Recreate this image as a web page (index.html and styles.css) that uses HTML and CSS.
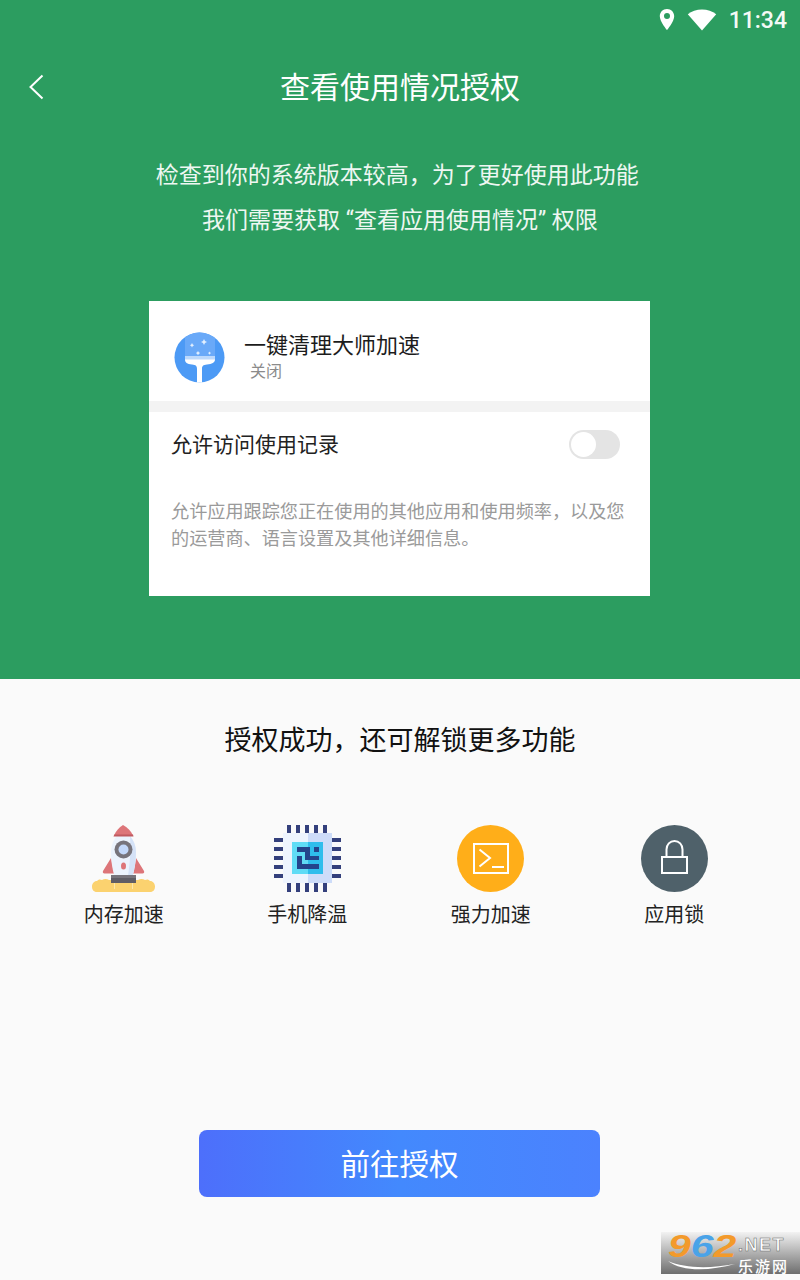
FILE: index.html
```html
<!DOCTYPE html>
<html lang="zh-CN">

<head>
    <meta charset="UTF-8">
    <meta name="viewport" content="width=device-width, initial-scale=1.0">
    <title>查看使用情况授权</title>
    <link rel="stylesheet" href="styles.css">
</head>

<body>
    <div id="main">
        <section class="top">
            <div class="status">
                <svg class="pin" width="16" height="24" viewBox="0 0 16 24">
                    <path fill="#fff" fill-rule="evenodd" d="M8 1C3.800 1 .8 4.200 .8 8.200 .8 13.500 8 22 8 22s7.200-8.500 7.200-13.800C15.200 4.200 12.200 1 8 1zm0 10.100a3 3 0 1 1 0-6 3 3 0 0 1 0 6z" />
                </svg>
                <svg class="wifi" width="30" height="22" viewBox="0 0 30 22">
                    <path fill="#fff" d="M15 21.500 .8 5.300C4.500 2.300 9.500 .6 15 .6s10.500 1.700 14.200 4.700z" />
                </svg>
                <span class="clock">11:34</span>
            </div>
            <header class="title-bar">
                <svg class="back" width="16" height="26" viewBox="0 0 16 26">
                    <path fill="none" stroke="#fff" stroke-width="2" d="M14.500 1.500 2.500 13l12 11.500" />
                </svg>
                <h1>查看使用情况授权</h1>
            </header>
            <p class="intro">检查到你的系统版本较高，为了更好使用此功能&nbsp;<br>我们需要获取 “查看应用使用情况” 权限</p>

            <div class="card">
                <div class="app-row">
                    <svg class="app-icon" width="51" height="51" viewBox="0 0 51 51">
                        <clipPath id="clip"><circle cx="25.500" cy="25.500" r="25" /></clipPath>
                        <circle cx="25.500" cy="25.500" r="25" fill="#4c9af5" />
                        <path fill="#69a9f8" d="M11 0h30v25H11z" clip-path="url(#clip)" />
                        <path fill="#bcd9fc" d="M11 24h30v4H11z" />
                        <path fill="#fff" d="M11 27.500h30c0 3-3 4.500-8 5-4 .5-5 1.500-5 4.500v13.500h-5V37c0-3-1-4-5-4.500-5-.5-7-2-7-5z" />
                        <path fill="#e2effe" d="m18 11 .8 1.400 1.400.8-1.400.8-.8 1.500-.8-1.500-1.400-.8 1.400-.8zM30 7l1 2 2 1-2 1-1 2-1-2-2-1 2-1zM24 19l.8 1.300 1.300.8-1.300.8-.8 1.300-.8-1.300-1.300-.8 1.300-.8zM35.500 19.500l.6 1 1 .6-1 .6-.6 1-.6-1-1-.6 1-.6z" />
                    </svg>
                    <div class="app-text">
                        <div class="app-name">一键清理大师加速</div>
                        <div class="app-state">关闭</div>
                    </div>
                </div>
                <div class="switch-row">
                    <span class="switch-label">允许访问使用记录</span>
                    <span class="switch"><span class="knob"></span></span>
                </div>
                <p class="desc">允许应用跟踪您正在使用的其他应用和使用频率，以及您的运营商、语言设置及其他详细信息。</p>
            </div>
        </section>

        <section class="bottom">
            <h2>授权成功，还可解锁更多功能</h2>
            <div class="features">
                <div class="feature">
                    <svg width="67" height="67" viewBox="0 0 67 67">
                        <path fill="#fbd26f" d="M7 67c-3.500 0-5-2.500-5-5.500S4 56 7 56c1-1.500 3-2 5-1 2-1.500 5-1.500 7 0h29c2-1.500 5-1.500 7 0 2-1 4-.5 5 1 3 0 5 2.500 5 5.500S63.500 67 60 67z" />
                        <path fill="#fde7a8" d="M24 58h1v6h-1zM42 58h1v6h-1z" />
                        <path fill="#dd7579" d="M21 33 13 46c-.5 1.500 0 2.500 1.500 2.500H24zM46 33l8 13c.5 1.500 0 2.500-1.500 2.500H43z" />
                        <path fill="#ecf3fd" d="M33.500 4C26 10 21 18 21 27c0 8 1 16 3.500 24h18C45 43 46 35 46 27c0-9-5-17-12.500-23z" />
                        <path fill="#d5e2f7" d="M40 11c4 5 6 10 6 16 0 8-1 16-3.500 24H38c2-13 3-27 2-40z" />
                        <path fill="#dd7579" d="M33 0C29 2.500 26 6 24 10.500h19C41 6 37.500 2.500 33 0z" />
                        <path fill="#c05a60" d="M23.500 11.500h20L43 9.500H24.300z" />
                        <circle cx="33.500" cy="24.500" r="9" fill="#77747c" />
                        <circle cx="33.500" cy="24.500" r="5" fill="#c3d8fa" />
                        <ellipse cx="33.500" cy="41" rx="2.500" ry="3.500" fill="#dd7579" />
                        <path fill="#5f5d65" d="M21 50h25v8H21z" />
                        <path fill="#77747c" d="M21 50h25v3H21z" />
                    </svg>
                    <span>内存加速</span>
                </div>
                <div class="feature">
                    <svg width="67" height="67" viewBox="0 0 67 67">
                        <path fill="#34407c" d="M13 0h4v9h-4zM22 0h4v9h-4zM31 0h4v9h-4zM40 0h4v9h-4zM49 0h4v9h-4zM13 58h4v9h-4zM22 58h4v9h-4zM31 58h4v9h-4zM40 58h4v9h-4zM49 58h4v9h-4zM0 13h9v4H0zM0 22h9v4H0zM0 31h9v4H0zM0 40h9v4H0zM0 49h9v4H0zM58 13h9v4h-9zM58 22h9v4h-9zM58 31h9v4h-9zM58 40h9v4h-9zM58 49h9v4h-9z" />
                        <path fill="#eef4fe" d="M9 8h25v50H9z" />
                        <path fill="#cddcf9" d="M34 8h24v50H34z" />
                        <path fill="#60dcf6" d="M18 17h16v32H18z" />
                        <path fill="#2fbdec" d="M34 17h15v32H34z" />
                        <path fill="#24448c" d="M23 22h13v5H23zM40 22h5v5h-5zM31 27h5v4h9v4H31zM23 31h5v8h17v5H23z" />
                    </svg>
                    <span>手机降温</span>
                </div>
                <div class="feature">
                    <svg width="67" height="67" viewBox="0 0 67 67">
                        <circle cx="33.500" cy="33.500" r="33.500" fill="#ffae19" />
                        <path fill="none" stroke="#fff" stroke-width="2" d="M17 19h34v29H17zM22.500 24.500 33 33l-10.500 8.500M35 42h12" />
                    </svg>
                    <span>强力加速</span>
                </div>
                <div class="feature">
                    <svg width="67" height="67" viewBox="0 0 67 67">
                        <circle cx="33.500" cy="33.500" r="33.500" fill="#4f616a" />
                        <path fill="none" stroke="#fff" stroke-width="2" d="M21 32h25v16H21zM25.500 32v-7.500c0-5 3.500-8.500 8-8.500s8 3.500 8 8.500V32" />
                    </svg>
                    <span>应用锁</span>
                </div>
            </div>
            <button class="go">前往授权</button>
        </section>

        <div class="watermark">
            <div class="wm-left">
                <span class="wm-num">9<span class="wm-blue">6</span>2</span>
                <svg class="wm-swoosh" width="68" height="12" viewBox="0 0 68 12">
                    <path fill="#fff" d="M0 1c16 7 40 8 67 3C42 11 14 12 0 1z" />
                </svg>
            </div>
            <div class="wm-right">
                <span class="wm-net">.NET</span>
                <span class="wm-sub">乐游网</span>
            </div>
        </div>
    </div>
</body>

</html>
```

FILE: styles.css
```css
* {
    margin: 0;
    padding: 0;
    box-sizing: border-box;
    font-family: "Noto Sans CJK SC", "Noto Sans", sans-serif;
}

#main {
    position: relative;
    width: 800px;
    height: 1280px;
    overflow: hidden;
    background-color: #fafafa;
}

.top {
    height: 679px;
    background-color: #2c9d60;
    color: #fff;
    display: flex;
    flex-direction: column;
    align-items: center;
}

.status {
    width: 100%;
    height: 40px;
    padding-right: 13px;
    display: flex;
    align-items: center;
    justify-content: flex-end;
}

.pin {
    margin-right: 12px;
}

.wifi {
    margin-right: 12px;
}

.clock {
    font-family: Roboto, sans-serif;
    font-size: 23px;
    font-weight: 500;
    color: #f4faf6;
}

.title-bar {
    position: relative;
    width: 100%;
    height: 94px;
    display: flex;
    align-items: center;
    justify-content: center;
}

.back {
    position: absolute;
    left: 28px;
    top: 34px;
}

h1 {
    font-size: 30px;
    font-weight: 400;
    line-height: 90px;
    margin-bottom: 4px;
}

.intro {
    margin-top: 19px;
    font-family: Roboto, "Noto Sans CJK SC", sans-serif;
    font-size: 23px;
    line-height: 45px;
    text-align: center;
    color: #eef7f2;
}

.card {
    width: 501px;
    height: 295px;
    margin-top: 58px;
    margin-right: 1px;
    background-color: #fff;
    color: #222;
}

.app-row {
    height: 111px;
    padding: 31px 0 0 25px;
    display: flex;
    border-bottom: 11px solid #f3f3f3;
}

.app-icon {
    flex-shrink: 0;
}

.app-text {
    margin-top: -4px;
    margin-left: 19px;
}

.app-name {
    font-size: 22px;
    line-height: 30px;
    color: #1c1c1c;
}

.app-state {
    margin-left: 6px;
    font-size: 16px;
    line-height: 24px;
    color: #8b8b8b;
}

.switch-row {
    height: 65px;
    padding: 0 30px 0 22px;
    font-size: 21px;
    display: flex;
    align-items: center;
    justify-content: space-between;
}

.switch-label {
    padding-bottom: 4px;
}

.switch {
    width: 51px;
    height: 29px;
    border-radius: 15px;
    background-color: #e4e4e4;
    display: flex;
    align-items: center;
    padding-left: 2px;
}

.knob {
    width: 25px;
    height: 25px;
    border-radius: 50%;
    background-color: #fff;
}

.desc {
    padding: 20px 22px 0;
    font-size: 18.150px;
    line-height: 27px;
    color: #9a9a9a;
}

.bottom {
    display: flex;
    flex-direction: column;
    align-items: center;
}

h2 {
    margin-top: 40px;
    font-size: 27px;
    font-weight: 400;
    line-height: 40px;
    color: #111;
}

.features {
    width: 734px;
    margin-top: 66px;
    margin-right: 2px;
    display: grid;
    grid-template-columns: repeat(4, 1fr);
    justify-items: center;
}

.feature {
    display: flex;
    flex-direction: column;
    align-items: center;
    font-size: 20px;
    line-height: 28px;
    color: #222;
}

.feature svg {
    margin-bottom: 8px;
}

.go {
    width: 401px;
    height: 67px;
    margin-top: 202px;
    margin-right: 1px;
    padding-bottom: 3px;
    border: none;
    border-radius: 8px;
    background: linear-gradient(90deg, #4d6ffb, #4389fd 50%, #4b82fe);
    color: #fff;
    font-size: 29.500px;
}

/* site stamp in the corner */
.watermark {
    position: absolute;
    right: 0;
    top: 1232px;
    width: 139px;
    height: 42px;
    padding-left: 7px;
    background: linear-gradient(180deg, #f2f2f2, #c4c4c4 35%, #6e6e6e);
    display: flex;
}

.wm-left {
    width: 70px;
    display: flex;
    flex-direction: column;
}

.wm-num {
    display: inline-block;
    width: 54px;
    font-family: "Liberation Sans", sans-serif;
    font-size: 32px;
    font-weight: 700;
    font-style: italic;
    line-height: 28px;
    color: #f39a2b;
    transform: scaleX(1.28);
    transform-origin: left;
}

.wm-blue {
    font: inherit;
    color: #4aa3e8;
}

.wm-right {
    display: flex;
    flex-direction: column;
    color: #fff;
}

.wm-net {
    font-family: "Liberation Sans", sans-serif;
    font-size: 18px;
    font-weight: 700;
    line-height: 26px;
    letter-spacing: 1.500px;
    -webkit-text-stroke: 0.5px #666;
}

.wm-sub {
    font-size: 15px;
    font-weight: 500;
    line-height: 15px;
    letter-spacing: 2px;
}
```
